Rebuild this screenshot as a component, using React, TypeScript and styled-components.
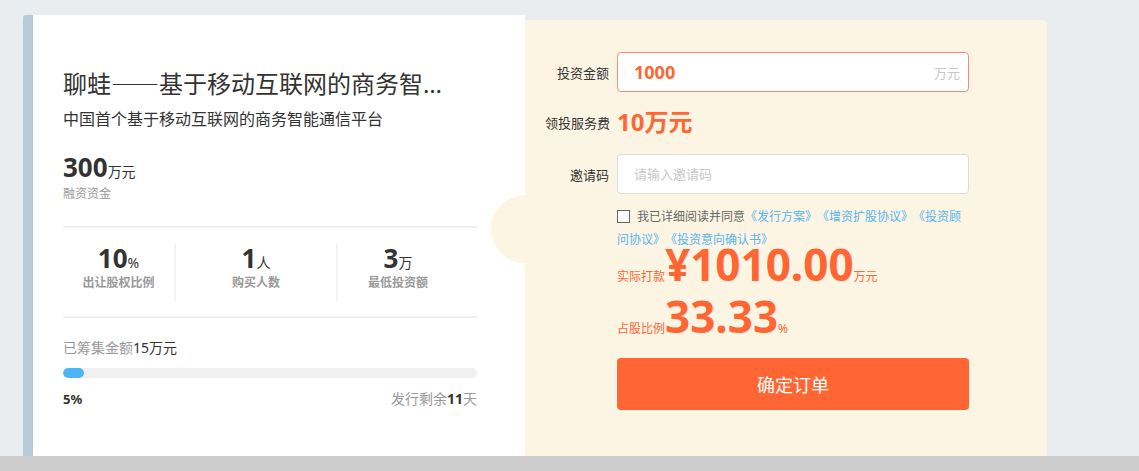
import { createGlobalStyle } from "styled-components";
import styled from "styled-components";

const GlobalStyle = createGlobalStyle`
  html, body {
    margin: 0;
    padding: 0;
    background: #e9edf0;
    font-family: "Noto Sans", "Noto Sans CJK SC", sans-serif;
    color: #333;
    overflow: hidden;
    text-spacing-trim: space-all;
  }
  * {
    box-sizing: border-box;
  }
`

const Viewport = styled.div`
  height: 456px;
  overflow: hidden;
`

const Wrapper = styled.div`
  display: flex;
  align-items: flex-start;
  padding: 15px 0 0 23px;
`

const ScrollTrack = styled.div`
  height: 15px;
  background: #cccccc;
`

const InfoCard = styled.div`
  width: 502px;
  height: 520px;
  background: #fff;
  border-left: 10px solid #b8c9d8;
  border-top-left-radius: 3px;
  padding: 50px 48px 0 30px;
`

const Title = styled.h1`
  width: 392px;
  margin: 0;
  font-size: 24px;
  font-weight: 400;
  line-height: 36px;
  white-space: nowrap;
  overflow: hidden;
  text-overflow: ellipsis;
`

const Dash = styled.span`
  font-family: "Noto Sans CJK SC", sans-serif;
  font-feature-settings: "fwid";
`

const Subtitle = styled.p`
  margin: 5px 0 0;
  font-size: 16px;
  line-height: 24px;
`

const Amount = styled.div`
  margin-top: 19px;
  font-size: 14px;
  line-height: 14px;

  strong {
    font-size: 26px;
    font-weight: 700;
    line-height: 34px;
  }
`

const Caption = styled.div<{ $bold?: boolean; $top?: number }>`
  margin-top: ${p => p.$top ?? 0}px;
  font-size: 12px;
  line-height: 16px;
  color: #999;
  font-weight: ${p => (p.$bold ? 700 : 400)};
`

const Divider = styled.div<{ $top: number }>`
  height: 2px;
  background: #f0f0f0;
  margin-top: ${p => p.$top}px;
`

const Stats = styled.div`
  display: flex;
  margin-top: 16px;
  height: 57px;
`

const Stat = styled.div<{ $width: number; $line?: boolean }>`
  width: ${p => p.$width}px;
  display: flex;
  flex-direction: column;
  align-items: center;
  border-right: ${p => (p.$line ? "2px solid #f4f4f4" : "none")};
  height: 57px;
`

const StatValue = styled.div`
  font-size: 14px;
  line-height: 14px;
  margin-bottom: 3px;

  strong {
    font-size: 26px;
    font-weight: 700;
    line-height: 28px;
  }
`

const Raised = styled.div`
  margin-top: 20px;
  font-size: 14px;
  line-height: 20px;
  color: #999;

  b {
    font-weight: 400;
    color: #333;
  }
`

const Progress = styled.div`
  margin-top: 10px;
  height: 10px;
  border-radius: 5px;
  background: #f0f0f0;
  overflow: hidden;
`

const ProgressFill = styled.div`
  height: 100%;
  border-radius: 5px;
  background: #4db5f4;
`

const ProgressMeta = styled.div`
  display: flex;
  justify-content: space-between;
  margin-top: 11px;
  font-size: 14px;
  line-height: 20px;
  color: #999;

  strong {
    color: #333;
    font-weight: 700;
  }
`

const Percent = styled.span`
  font-size: 13px;
  font-weight: 700;
  color: #333;
`

const OrderPanel = styled.div`
  position: relative;
  margin-top: 5px;
  width: 522px;
  height: 520px;
  background: #fdf5e4;
  border-top-right-radius: 5px;
  padding: 32px 78px 0 20px;
`

const Bump = styled.div`
  position: absolute;
  left: -34px;
  top: 175px;
  width: 68px;
  height: 68px;
  border-radius: 50%;
  background: #fdf5e4;
`

const Row = styled.div<{ $gap: number }>`
  display: flex;
  align-items: center;
  gap: 8px;
  min-height: 40px;
  margin-bottom: ${p => p.$gap}px;
`

const Label = styled.label`
  width: 64px;
  text-align: right;
  font-size: 13px;
  color: #333;
  white-space: nowrap;
`

const Field = styled.div<{ $active?: boolean }>`
  flex: 1;
  height: 40px;
  display: flex;
  align-items: center;
  background: #fff;
  border: 1px solid ${p => (p.$active ? "#ff8a74" : "#dcdcdc")};
  border-radius: 4px;
  padding: 0 8px 0 16px;
`

const Input = styled.input<{ $strong?: boolean }>`
  flex: 1;
  min-width: 0;
  border: none;
  outline: none;
  background: transparent;
  font-family: inherit;
  font-size: ${p => (p.$strong ? "18px" : "13px")};
  font-weight: ${p => (p.$strong ? 700 : 400)};
  color: #ff6633;
  padding: 0;

  &::placeholder {
    color: #c8c8c8;
  }
`

const Suffix = styled.span`
  font-size: 13px;
  color: #c8c8c8;
`

const Fee = styled.span`
  font-size: 24px;
  font-weight: 700;
  color: #ff6633;
  line-height: 40px;
`

const Agreement = styled.div`
  margin: 10px 0 0 72px;
  font-family: "Noto Sans CJK SC", sans-serif;
  font-size: 12px;
  line-height: 23px;
  color: #666;
  text-spacing-trim: space-all;

  a {
    color: #56b4f0;
    text-decoration: none;
    font-feature-settings: "fwid";
  }
`

const Check = styled.span`
  display: inline-block;
  width: 13px;
  height: 13px;
  border: 1px solid #666;
  background: #fff;
  vertical-align: -2px;
  margin-right: 7px;
`

const Total = styled.div<{ $top: number }>`
  margin: ${p => p.$top}px 0 0 72px;
  color: #ff6633;
  font-size: 12px;
  line-height: 12px;

  strong {
    font-size: 44px;
    font-weight: 700;
    line-height: 44px;
  }
`

const SubmitButton = styled.button`
  display: block;
  width: 352px;
  height: 52px;
  margin: 20px 0 0 72px;
  border: none;
  border-radius: 4px;
  background: #ff6633;
  color: #fff;
  font-family: inherit;
  font-size: 18px;
  cursor: pointer;
`

const stats = [
  { value: "10", unit: "%", label: "出让股权比例", width: 113 },
  { value: "1", unit: "人", label: "购买人数", width: 162 },
  { value: "3", unit: "万", label: "最低投资额", width: 120 },
]

const docs = ["《发行方案》", "《增资扩股协议》", "《投资顾问协议》", "《投资意向确认书》"]

export default function App() {
  const raised = 15
  const goal = 300
  return (
    <>
      <GlobalStyle />
      <Viewport>
        <Wrapper>
          <InfoCard>
            <Title>
              聊蛙<Dash>——</Dash>基于移动互联网的商务智能通信平台
            </Title>
            <Subtitle>中国首个基于移动互联网的商务智能通信平台</Subtitle>
            <Amount>
              <strong>300</strong>万元
            </Amount>
            <Caption $top={2}>融资资金</Caption>
            <Divider $top={24} />
            <Stats>
              {stats.map((s, i) => (
                <Stat key={s.label} $width={s.width} $line={i < stats.length - 1}>
                  <StatValue>
                    <strong>{s.value}</strong>
                    {s.unit}
                  </StatValue>
                  <Caption $bold>{s.label}</Caption>
                </Stat>
              ))}
            </Stats>
            <Divider $top={15} />
            <Raised>
              已筹集金额<b>15万元</b>
            </Raised>
            <Progress>
              <ProgressFill style={{ width: `${(raised / goal) * 100}%` }} />
            </Progress>
            <ProgressMeta>
              <Percent>5%</Percent>
              <span>
                发行剩余<strong>11</strong>天
              </span>
            </ProgressMeta>
          </InfoCard>

          <OrderPanel>
            <Bump />
            <Row $gap={10}>
              <Label>投资金额</Label>
              <Field $active>
                <Input $strong defaultValue="1000" />
                <Suffix>万元</Suffix>
              </Field>
            </Row>
            <Row $gap={12}>
              <Label>领投服务费</Label>
              <Fee>10万元</Fee>
            </Row>
            <Row $gap={0}>
              <Label>邀请码</Label>
              <Field>
                <Input placeholder="请输入邀请码" />
              </Field>
            </Row>
            <Agreement>
              <Check />
              我已详细阅读并同意
              {docs.map(d => (
                <a key={d} href="#">
                  {d}
                </a>
              ))}
            </Agreement>
            <Total $top={-8}>
              实际打款<strong>¥1010.00</strong>万元
            </Total>
            <Total $top={8}>
              占股比例<strong>33.33</strong>%
            </Total>
            <SubmitButton>确定订单</SubmitButton>
          </OrderPanel>
        </Wrapper>
      </Viewport>
      <ScrollTrack />
    </>
  )
}
